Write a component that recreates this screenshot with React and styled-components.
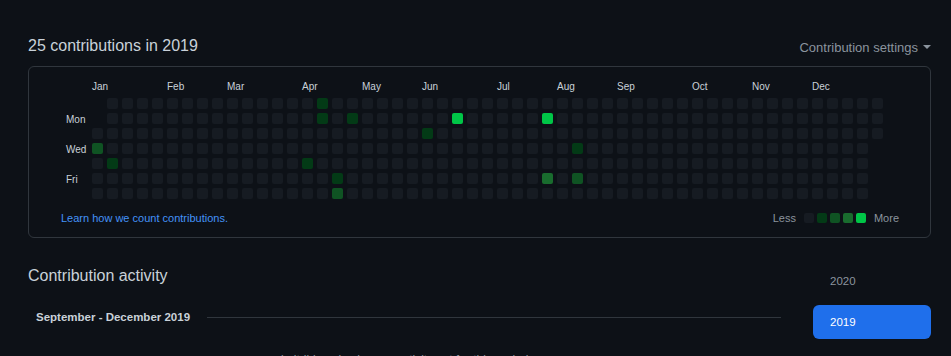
import { createGlobalStyle, styled } from "styled-components";

const LEVELS = ["#161b22", "#033a16", "#0f5323", "#196c2e", "#00c647"];

const MONTHS = [
  ["Jan", 0],
  ["Feb", 5],
  ["Mar", 9],
  ["Apr", 14],
  ["May", 18],
  ["Jun", 22],
  ["Jul", 27],
  ["Aug", 31],
  ["Sep", 35],
  ["Oct", 40],
  ["Nov", 44],
  ["Dec", 48],
];

// "col,row" -> level
const ACTIVITY = {
  "0,3": 2,
  "1,4": 1,
  "14,4": 1,
  "15,0": 1,
  "15,1": 1,
  "16,5": 1,
  "16,6": 2,
  "17,1": 1,
  "22,2": 1,
  "24,1": 4,
  "30,1": 4,
  "30,5": 3,
  "32,3": 1,
  "32,5": 2,
};

function buildCells() {
  const cells = [];
  for (let col = 0; col < 53; col++) {
    for (let row = 0; row < 7; row++) {
      if (col === 52 && row > 2) break;
      const hidden = col === 0 && row < 2;
      cells.push({
        key: `${col}-${row}`,
        hidden,
        level: ACTIVITY[`${col},${row}`] || 0,
      });
    }
  }
  return cells;
}

export default function App() {
  const cells = buildCells();

  return (
    <>
      <GlobalStyle />
      <Page>
        <Header>
          <Title>25 contributions in 2019</Title>
          <Settings>
            Contribution settings <Caret />
          </Settings>
        </Header>

        <Card>
          <Graph>
            <MonthRow>
              {MONTHS.map(([name, col]) => (
                <Month key={name} $col={col}>
                  {name}
                </Month>
              ))}
            </MonthRow>
            <GraphBody>
              <DayLabels>
                <Day $row={2}>Mon</Day>
                <Day $row={4}>Wed</Day>
                <Day $row={6}>Fri</Day>
              </DayLabels>
              <Cells>
                {cells.map((c) => (
                  <Cell key={c.key} $level={c.level} $hidden={c.hidden} />
                ))}
              </Cells>
            </GraphBody>
          </Graph>
          <Footer>
            <LearnLink href="#">Learn how we count contributions.</LearnLink>
            <Legend>
              <span>Less</span>
              <LegendCells>
                {LEVELS.map((_, i) => (
                  <LegendCell key={i} $level={i} />
                ))}
              </LegendCells>
              <span>More</span>
            </Legend>
          </Footer>
        </Card>

        <Activity>
          <Timeline>
            <Title as="h3">Contribution activity</Title>
            <PeriodRow>
              <PeriodLabel>September - December 2019</PeriodLabel>
              <PeriodLine />
            </PeriodRow>
            <EmptyNote>dmitrij-kovalev has no activity yet for this period.</EmptyNote>
          </Timeline>
          <Years>
            <Year>2020</Year>
            <Year $active>2019</Year>
          </Years>
        </Activity>
      </Page>
    </>
  );
}

const GlobalStyle = createGlobalStyle`
  html, body {
    margin: 0;
    background: #0d1117;
    overflow: hidden;
  }
  body {
    font-family: "Liberation Sans", Arial, sans-serif;
    color: #c9d1d9;
  }
`;

const Page = styled.div`
  padding: 34px 20px 0 28px;
`;

const Header = styled.div`
  display: flex;
  justify-content: space-between;
  align-items: center;
  height: 24px;
  margin-bottom: 8px;
`;

const Title = styled.h2`
  margin: 0;
  font-size: 16px;
  font-weight: 400;
  line-height: 24px;
  color: #c9d1d9;
`;

const Settings = styled.div`
  display: flex;
  align-items: center;
  gap: 5px;
  font-size: 13px;
  color: #8b949e;
  padding-top: 2px;
`;

const Caret = styled.span`
  width: 0;
  height: 0;
  border-top: 4px solid #8b949e;
  border-left: 4px solid transparent;
  border-right: 4px solid transparent;
`;

const Card = styled.div`
  border: 1px solid #30363d;
  border-radius: 6px;
  padding: 13px 31px 12px 32px;
`;

const Graph = styled.div`
  padding-left: 5px;
`;

const MonthRow = styled.div`
  display: grid;
  grid-template-columns: repeat(53, 11px);
  column-gap: 4px;
  height: 14px;
  margin: 0 0 4px 26px;
`;

const Month = styled.span`
  grid-column: ${(p) => p.$col + 1} / span 3;
  font-size: 10px;
  line-height: 14px;
  color: #c9d1d9;
  white-space: nowrap;
`;

const GraphBody = styled.div`
  display: flex;
`;

const DayLabels = styled.div`
  width: 26px;
  display: grid;
  grid-template-rows: repeat(7, 11px);
  row-gap: 4px;
`;

const Day = styled.span`
  grid-row: ${(p) => p.$row};
  font-size: 10px;
  line-height: 13px;
  color: #c9d1d9;
`;

const Cells = styled.div`
  display: grid;
  grid-template-rows: repeat(7, 11px);
  grid-auto-flow: column;
  grid-auto-columns: 11px;
  gap: 4px;
`;

const Cell = styled.span`
  border-radius: 2px;
  background: ${(p) => LEVELS[p.$level]};
  visibility: ${(p) => (p.$hidden ? "hidden" : "visible")};
`;

const Footer = styled.div`
  display: flex;
  justify-content: space-between;
  align-items: center;
  height: 14px;
  margin-top: 12px;
`;

const LearnLink = styled.a`
  font-size: 11px;
  color: #4493f8;
  text-decoration: none;
`;

const Legend = styled.div`
  display: flex;
  align-items: center;
  gap: 8px;
  font-size: 11px;
  color: #8b949e;
`;

const LegendCells = styled.div`
  display: flex;
  gap: 3px;
`;

const LegendCell = styled.span`
  width: 10px;
  height: 10px;
  border-radius: 2px;
  background: ${(p) => LEVELS[p.$level]};
`;

const Activity = styled.div`
  display: flex;
  gap: 32px;
  margin-top: 26px;
`;

const Timeline = styled.div`
  flex: 1;
`;

const PeriodRow = styled.div`
  display: flex;
  align-items: center;
  gap: 17px;
  height: 24px;
  margin-top: 17px;
  padding-left: 8px;
`;

const PeriodLabel = styled.span`
  font-size: 11.5px;
  font-weight: 700;
  color: #c9d1d9;
  white-space: nowrap;
`;

const PeriodLine = styled.div`
  flex: 1;
  height: 1px;
  background: #30363d;
`;

const EmptyNote = styled.p`
  margin: 23px 0 0;
  text-align: center;
  font-size: 12px;
  line-height: 16px;
  color: #8b949e;
`;

const Years = styled.div`
  width: 118px;
  display: flex;
  flex-direction: column;
  gap: 7px;
`;

const Year = styled.div`
  height: 34px;
  line-height: 34px;
  padding-left: 17px;
  border-radius: 6px;
  font-size: 11.5px;
  color: ${(p) => (p.$active ? "#ffffff" : "#8b949e")};
  background: ${(p) => (p.$active ? "#1f6feb" : "transparent")};
`;
